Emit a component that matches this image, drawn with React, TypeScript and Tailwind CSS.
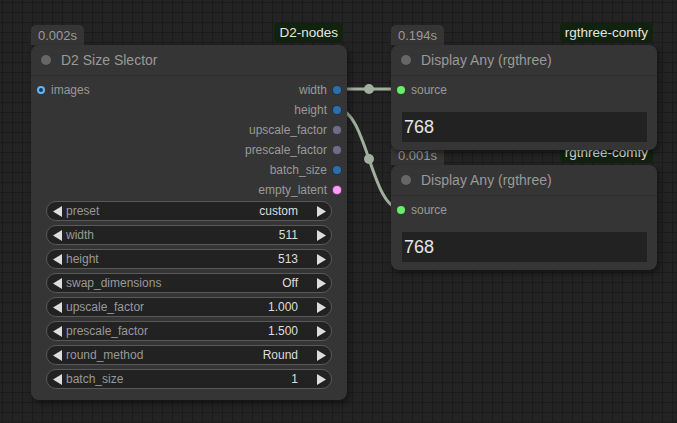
import type { ReactNode } from "react";

const FONT = "font-['Liberation_Sans',Arial,Helvetica,sans-serif]";

function Tri({ dir }: { dir: "left" | "right" }) {
  return (
    <svg width="9" height="11" viewBox="0 0 9 11" className="shrink-0">
      <polygon points={dir === "left" ? "9,0 9,11 0,5.5" : "0,0 0,11 9,5.5"} fill="#dddddd" />
    </svg>
  );
}

function Widget({ label, value }: { label: string; value: string }) {
  return (
    <div className="mx-[15px] flex h-5 items-center rounded-full border border-[#595959] bg-[#222222] pl-[6px] pr-[5px] text-[12px] leading-none">
      <Tri dir="left" />
      <span className="ml-[4px] text-[#999999]">{label}</span>
      <span className="ml-auto text-[#dddddd]">{value}</span>
      <span className="ml-[19px] flex">
        <Tri dir="right" />
      </span>
    </div>
  );
}

function Dot({ color }: { color: string }) {
  return <span className={`block h-2 w-2 shrink-0 rounded-full ${color}`} />;
}

function Badges({ time, pack, top, left, width }: { time: string; pack: string; top: number; left: number; width: number }) {
  return (
    <div className="absolute flex items-start justify-between" style={{ top, left, width }}>
      <div className="mt-[2px] flex h-[20px] items-center rounded-t-[5px] bg-[#353535] px-[7px] text-[13px] leading-none text-[#9a9a9a]">
        {time}
      </div>
      <div className="mr-[4px] flex h-[19px] items-center rounded-[4px] bg-[#11220f] px-[5px] text-[13.5px] leading-none text-[#e4e4e4]">
        {pack}
      </div>
    </div>
  );
}

function NodeShell({ title, top, left, width, height, children }: { title: string; top: number; left: number; width: number; height: number; children: ReactNode }) {
  return (
    <div
      className="absolute flex flex-col rounded-[8px] bg-[#353535] shadow-[2px_3px_6px_rgba(0,0,0,0.45)]"
      style={{ top, left, width, height }}
    >
      <div className="flex h-[31px] shrink-0 items-center gap-[10px] border-b border-[#2e2e2e] pl-[10px]">
        <span className="block h-[10px] w-[10px] rounded-full bg-[#666666]" />
        <span className="text-[14px] leading-none text-[#999999]">{title}</span>
      </div>
      {children}
    </div>
  );
}

const outputs = [
  { label: "width", color: "bg-[#2f6fa8] ring-1 ring-[#1c3550]" },
  { label: "height", color: "bg-[#2f6fa8] ring-1 ring-[#1c3550]" },
  { label: "upscale_factor", color: "bg-[#6e6e86] ring-1 ring-[#3a3a48]" },
  { label: "prescale_factor", color: "bg-[#6e6e86] ring-1 ring-[#3a3a48]" },
  { label: "batch_size", color: "bg-[#2f6fa8] ring-1 ring-[#1c3550]" },
  { label: "empty_latent", color: "bg-[#ff9cf9] ring-1 ring-[#6a3f68]" },
];

const widgets = [
  { label: "preset", value: "custom" },
  { label: "width", value: "511" },
  { label: "height", value: "513" },
  { label: "swap_dimensions", value: "Off" },
  { label: "upscale_factor", value: "1.000" },
  { label: "prescale_factor", value: "1.500" },
  { label: "round_method", value: "Round" },
  { label: "batch_size", value: "1" },
];

function DisplayNode({ top }: { top: number }) {
  return (
    <NodeShell title="Display Any (rgthree)" top={top} left={391} width={266} height={105}>
      <div className="mt-[4px] flex h-5 items-center gap-[6px] pl-[6px] text-[12px] leading-none text-[#999999]">
        <Dot color="bg-[#66ee66]" />
        <span>source</span>
      </div>
      <div className="ml-[11px] mr-[10px] mt-[12px] flex h-[30px] items-center bg-[#222222] pl-[2px] text-[18px] leading-none text-[#e6e6e6]">
        768
      </div>
    </NodeShell>
  );
}

export default function App() {
  return (
    <div
      className={`relative h-[423px] w-[677px] overflow-hidden bg-[#232323] bg-[linear-gradient(to_right,#1b1b1b_1px,transparent_1px),linear-gradient(to_bottom,#1b1b1b_1px,transparent_1px)] bg-[size:10px_10px] bg-[position:2px_2px] ${FONT}`}
    >
      {/* links, behind the nodes */}
      <svg className="absolute left-0 top-0" width="677" height="423">
        <path d="M337 89 L401 89" stroke="#a1b09d" strokeWidth="3" fill="none" />
        <path d="M337 109 C367 109, 371 209, 401 209" stroke="#a1b09d" strokeWidth="3" fill="none" />
        <circle cx="369" cy="89" r="5" fill="#a1b09d" />
        <circle cx="369" cy="159" r="5" fill="#a1b09d" />
      </svg>

      {/* D2 Size Slector */}
      <Badges time="0.002s" pack="D2-nodes" top={23} left={31} width={316} />
      <NodeShell title="D2 Size Slector" top={45} left={31} width={316} height={355}>
        <div className="mt-[4px] flex flex-col text-[12px] leading-none text-[#999999]">
          {outputs.map((o, i) => (
            <div key={o.label} className="flex h-5 items-center pl-[6px] pr-[6px]">
              {i === 0 && (
                <span className="flex items-center gap-[6px]">
                  <span className="block h-2 w-2 rounded-full border-2 border-[#64b5f6] bg-[#1d3950]" />
                  <span>images</span>
                </span>
              )}
              <span className="ml-auto flex items-center gap-[6px]">
                <span>{o.label}</span>
                <Dot color={o.color} />
              </span>
            </div>
          ))}
        </div>
        <div className="mt-[1px] flex flex-col gap-1">
          {widgets.map((w) => (
            <Widget key={w.label} label={w.label} value={w.value} />
          ))}
        </div>
      </NodeShell>

      {/* Display Any, lower one first so the upper node covers its badges */}
      <Badges time="0.001s" pack="rgthree-comfy" top={143} left={391} width={266} />
      <DisplayNode top={165} />
      <Badges time="0.194s" pack="rgthree-comfy" top={23} left={391} width={266} />
      <DisplayNode top={45} />
    </div>
  );
}
